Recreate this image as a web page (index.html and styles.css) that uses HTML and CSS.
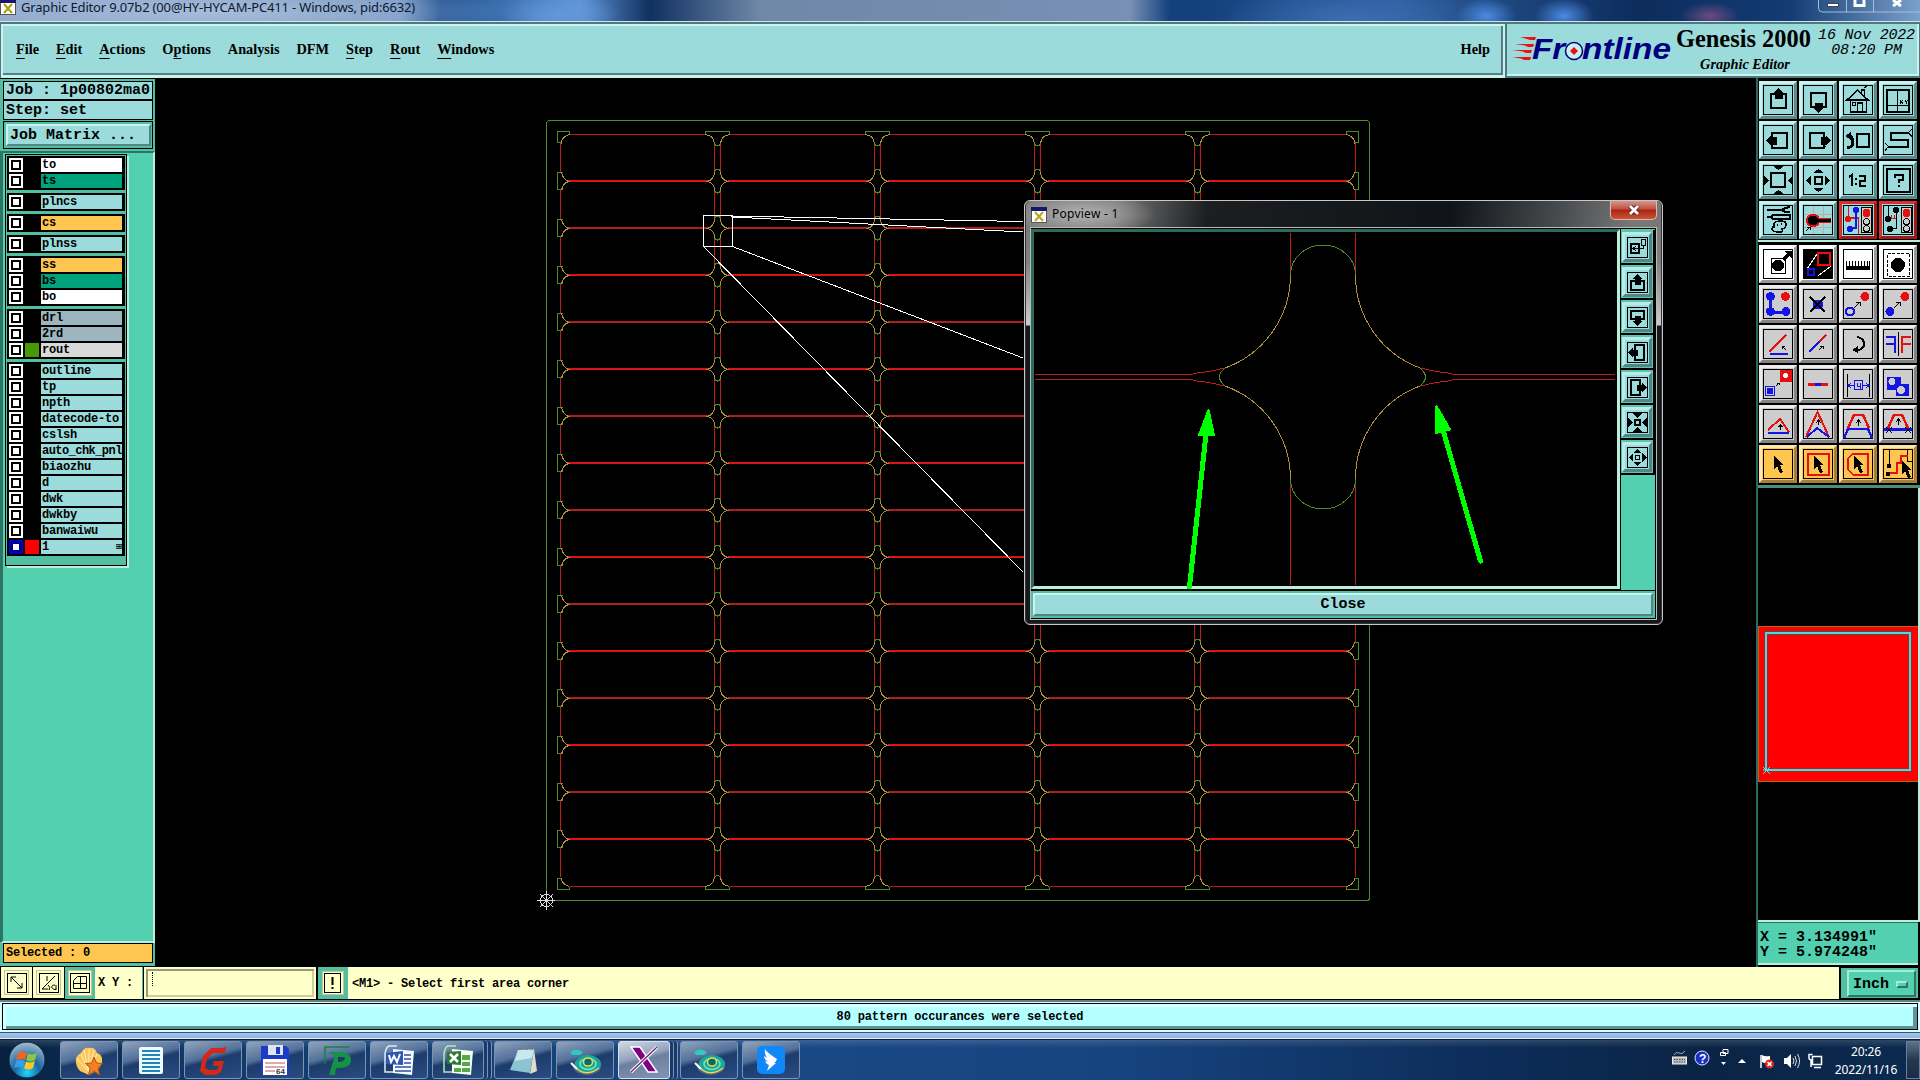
FILE: index.html
```html
<!DOCTYPE html>
<html lang="en">
<head>
    <meta charset="UTF-8">
    <title>Graphic Editor 9.07b2</title>
    <link rel="stylesheet" href="styles.css">
</head>
<body>
    <header class="titlebar">
        <svg class="app-icon" width="16" height="16"><rect x="0.5" y="0.5" width="15" height="15" fill="#fff" stroke="#555"/><rect width="16" height="4" fill="#16166e"/><path d="M4 5l8 9M12 5l-8 9" stroke="#a8a000" stroke-width="2"/></svg>
        <span class="window-title">Graphic Editor 9.07b2 (00@HY-HYCAM-PC411 - Windows, pid:6632)</span>
        <div class="window-buttons">
            <svg width="102" height="13" fill="none"><path d="M.5 0v8q0 4 4 4H102M28.500 0v12M55.500 0v12" stroke="#a9bdd6"/><rect x="9.500" y="3.500" width="11" height="3" fill="#fff" stroke="#444"/><path d="M37 0v5.500h9V0" stroke="#fff" stroke-width="3"/><path d="M75 0l8 6M83 0l-8 6" stroke="#fff" stroke-width="3"/></svg>
        </div>
    </header>

    <div class="top">
        <nav class="menubar">
            <span><u>F</u>ile</span>
            <span><u>E</u>dit</span>
            <span><u>A</u>ctions</span>
            <span>O<u>p</u>tions</span>
            <span>Analysis</span>
            <span>DFM</span>
            <span><u>S</u>tep</span>
            <span><u>R</u>out</span>
            <span><u>W</u>indows</span>
            <span class="help">Help</span>
        </nav>
        <div class="brand">
            <svg class="logo" width="164" height="40">
                <path d="M8 9h16l-1 3h-5l-3-1zM3 16h19l-1 3h-5l-3-1.500zM0 22h20l-1 3h-5l-3-1.500zM0 29h19l-1 3h-6l-3-1.500z" fill="#f01010"/>
                <g class="logo-text"><text x="20" y="31" textLength="33" lengthAdjust="spacingAndGlyphs">Fr</text><text x="70" y="31" textLength="89" lengthAdjust="spacingAndGlyphs">ntline</text></g>
                <circle cx="62" cy="23" r="8.500" fill="#c9eeee" stroke="#000080" stroke-width="1.500"/>
                <path d="M62 19l4 4-4 4-4-4z" fill="#f01010"/>
            </svg>
            <div class="product">
                <div class="product-name">Genesis 2000</div>
                <div class="product-sub">Graphic Editor</div>
            </div>
            <div class="brand-date">16 Nov 2022<br>08:20 PM</div>
        </div>
    </div>

    <main class="main">
        <aside class="left">
            <div class="job-line">Job : 1p00802ma0</div>
            <div class="job-line step">Step: set</div>
            <div class="matrix-frame"><button class="matrix">Job Matrix ...</button></div>
            <div class="layer-area">
                <div class="layers" id="layers"></div>
            </div>
            <div class="selected">Selected : 0</div>
        </aside>

        <svg class="canvas" id="canvas" width="1601" height="889" viewBox="155 78 1601 889"></svg>

        <aside class="right">
            <div class="tools pale" id="viewTools"></div>
            <div class="tools grey" id="editTools"></div>
            <div class="overview">
                <svg width="160" height="432" viewBox="1758 488 160 432">
                    <rect x="1758.500" y="626.500" width="160" height="155" fill="#f00" stroke="#b06a10"/>
                    <rect x="1766" y="633" width="144" height="137" fill="none" stroke="#4e4e50" stroke-width="4"/>
                    <rect x="1766" y="633" width="144" height="137" fill="none" stroke="#b0b0b4" stroke-width="2"/>
                    <path d="M1765 633h146" stroke="#50d8d8" stroke-width="2"/>
                    <path d="M1763 767l7 7M1770 767l-7 7M1763 770h7" stroke="#50e8e8"/>
                </svg>
            </div>
            <div class="coords">X = 3.134991"<br>Y = 5.974248"</div>
        </aside>

        <section class="popview">
            <div class="pop-title">
                <svg width="16" height="16"><rect x="0.500" y="0.500" width="15" height="15" fill="#fff" stroke="#555"/><rect width="16" height="4" fill="#16166e"/><path d="M4 5l8 9M12 5l-8 9" stroke="#b8a820" stroke-width="2"/></svg>
                <span>Popview - 1</span>
                <div class="pop-x"><svg width="12" height="10"><path d="M2 1l8 8M10 1l-8 8" stroke="#4a2020" stroke-width="4.500"/><path d="M2 1l8 8M10 1l-8 8" stroke="#fff" stroke-width="2.800"/></svg></div>
            </div>
            <div class="pop-body">
                <div class="pop-main">
                    <svg class="pop-canvas" width="583" height="354" viewBox="1034 232 583 354" fill="none">
                        <path class="red" d="M1290.500 233V275M1355.500 233V275M1290.500 480V585M1355.500 480V585M1035 374.500H1193M1035 379.500H1193M1452 374.500H1615M1452 379.500H1615"/>
                        <path class="red" d="M1193 373.500Q1210 372 1225 368M1193 380.500Q1210 382 1225 386M1452 373.500Q1435 372 1420 368M1452 380.500Q1435 382 1420 386"/>
                        <path class="gold" d="M1290.500 275A99 99 0 0 1 1225 368M1355.500 275A99 99 0 0 0 1420 368M1290.500 479A99 99 0 0 0 1225 386M1355.500 479A99 99 0 0 1 1420 386"/>
                        <path class="green" d="M1290.500 275A32.500 30 0 0 1 1355.500 275M1290.500 479A32.500 30 0 0 0 1355.500 479M1225 368Q1214 377 1225 386M1420 368Q1431 377 1420 386"/>
                        <g fill="#0f0" stroke="#0f0" stroke-linejoin="round">
                            <path d="M1208.500 410L1199 435H1214z" stroke-width="2"/>
                            <path d="M1206 434L1189.500 587" stroke-width="5" stroke-linecap="round"/>
                            <path d="M1436.500 406L1435.500 433L1450 429.500z" stroke-width="2"/>
                            <path d="M1443 430L1480.500 561" stroke-width="5" stroke-linecap="round"/>
                        </g>
                    </svg>
                    <div class="pop-tools" id="popTools"></div>
                </div>
                <div class="close-frame"><button class="close">Close</button></div>
            </div>
        </section>
    </main>

    <div class="command">
        <div class="cmd-btn"><svg width="20" height="20" fill="none" stroke="#000"><rect x=".5" y=".5" width="19" height="19"/><path d="M4 4l11 11M4 9V4h5M15 10v5h-5"/></svg></div>
        <div class="cmd-btn"><svg width="20" height="20" fill="none" stroke="#000"><rect x=".5" y=".5" width="19" height="19"/><path d="M16 3L3 16h6M8 3v5"/><path d="M9 12q3 2 1 5M16 12q-4 0-3 2.500t4 2M17 12v5"/></svg></div>
        <div class="cmd-btn on"><svg width="20" height="20" fill="none" stroke="#000"><rect x=".5" y=".5" width="19" height="19"/><path d="M3.500 7.500l4-4h9v12h-13zM3.500 10.500h13M10.500 3.500v12"/></svg></div>
        <label class="cmd-label">X Y :</label>
        <div class="cmd-input"><i></i></div>
        <div class="cmd-btn on bang"><svg width="18" height="20" fill="none" stroke="#000"><rect x=".5" y=".5" width="16" height="19"/><path d="M8.500 4v8M8.500 14v2" stroke-width="2"/></svg></div>
        <div class="cmd-message">&lt;M1&gt; - Select first area corner</div>
        <div class="unit"><div class="unit-btn">Inch<b></b></div></div>
    </div>

    <div class="status"><div class="status-box">80 pattern occurances were selected</div></div>
    <div class="strip"></div>

    <footer class="taskbar">
        <svg class="orb" width="60" height="40">
            <defs><radialGradient id="orbFill" cx=".5" cy=".85" r=".8"><stop offset="0" stop-color="#25d5ff"/><stop offset=".45" stop-color="#17659f"/><stop offset="1" stop-color="#9ab4c8"/></radialGradient></defs>
            <circle cx="27" cy="20" r="18" fill="url(#orbFill)" stroke="#0a2340"/>
            <path d="M18 13q4-3 9 0l-2 7q-4-2-9 0z" fill="#ee6424"/><path d="M28 13.500q5 2 9-.5l-2 7q-4 3-9 0z" fill="#8cc63e"/>
            <path d="M16 21q4-3 9 0l-2 7q-4-2-9 0z" fill="#35a0e8"/><path d="M26 21.500q5 2 9-.5l-2 7q-4 3-9 0z" fill="#fcc827"/>
        </svg>
        <div class="tasks" id="tasks"></div>
        <div class="tray">
            <svg width="160" height="40" fill="none">
                <rect x="1.500" y="17" width="14" height="7" fill="#bbb" stroke="#eee"/><path d="M3 19.500h11M3 22h11" stroke="#555" stroke-dasharray="1.500 1"/><path d="M3 15q2-4 5-2t6-2" stroke="#aaa"/>
                <circle cx="31" cy="18" r="7" fill="#1c2fc0" stroke="#dfe6ff"/><text x="28" y="22.500" fill="#fff" font-size="12" font-weight="bold" font-family="Liberation Sans, sans-serif">?</text>
                <path d="M52 9.500h5v4h-5zM49.500 12.500h5v3h-5z" stroke="#fff" fill="#12284a"/><path d="M50 22h5l-2.500 3z" fill="#fff"/>
                <path d="M67 23l4-4 4 4z" fill="#fff"/>
                <path d="M90 15v13" stroke="#fff" stroke-width="1.500"/><path d="M91 15q3 2 8 1v7q-5 1-8-1z" fill="#fff"/><circle cx="98.500" cy="24" r="4.500" fill="#d8281c"/><path d="M96.500 22l4 4M100.500 22l-4 4" stroke="#fff" stroke-width="1.500"/>
                <path d="M113 18h3l4-4v14l-4-4h-3z" fill="#fff"/><path d="M122 18q2 3 0 6M124 16q3 5 0 10M126.500 14q4 7 0 14" stroke="#ddd"/>
                <path d="M141.500 16.500h9v8h-9zM143 27.500h7M138 14v4q0 2 3 2M137.500 14.500h4M140 20v7" stroke="#fff" stroke-width="1.500"/>
            </svg>
            <div class="clock">20:26<br>2022/11/16</div>
            <div class="desktop"></div>
        </div>
    </footer>

    <script>
        // ---- layer list ----
        const layerGroups = [
            [["to", "white"], ["ts", "teal"]],
            [["plncs", ""]],
            [["cs", "orange"]],
            [["plnss", ""]],
            [["ss", "orange"], ["bs", "teal"], ["bo", "white"]],
            [["drl", "slate"], ["2rd", "slate"], ["rout", "silver", "lime"]],
            [["outline", ""], ["tp", ""], ["npth", ""], ["datecode-to", ""], ["cslsh", ""], ["auto_chk_pnl", "tight"],
             ["biaozhu", ""], ["d", ""], ["dwk", ""], ["dwkby", ""], ["banwaiwu", ""], ["1", "", "red-swatch", "active"]]
        ];
        document.getElementById("layers").innerHTML = layerGroups.map(group =>
            `<div class="layer-group">${group.map(([name, color, swatch, active]) => `
                <div class="layer">
                    <span class="check ${active || ""}"></span>
                    <span class="swatch ${swatch || ""}"></span>
                    <span class="layer-name ${color}">${name}${active ? "<em>⊞</em>" : ""}</span>
                </div>`).join("")}</div>`).join("");

        // ---- tool icons, drawn on a 38px cell ----
        const frame = `<rect x="4.500" y="4.500" width="29" height="29" fill="none" stroke="#000"/>`;
        const box = (x, y, w, h) => `<rect x="${x}" y="${y}" width="${w}" height="${h}" fill="none" stroke="#000" stroke-width="2"/>`;
        const black = d => `<path d="${d}" fill="#000"/>`;
        const line = (d, c = "#000", w = 1) => `<path d="${d}" fill="none" stroke="${c}" stroke-width="${w}"/>`;
        const dot = (x, y, r, c = "#000", s = "none") => `<circle cx="${x}" cy="${y}" r="${r}" fill="${c}" stroke="${s}" stroke-width="2"/>`;
        const red = "#e61010", blue = "#1414e6";
        const light = `<rect x="22.500" y="6.500" width="10" height="25" fill="#ccc" stroke="#000"/>` + dot(27.500, 12, 4, red) +
            `<g stroke="#000" fill="none"><circle cx="27.500" cy="20.500" r="3"/><circle cx="27.500" cy="27.500" r="3"/></g>`;
        const cursor = black("M15 11v13l3-3 3 7 3-1-3-7h4z");

        const viewIcons = [
            box(12, 13, 15, 14) + black("M19.500 7l6 5.500h-2v5h-8v-5h-2z"),
            box(12, 12, 15, 14) + black("M19.500 32l6-5.500h-2v-5h-8v5h-2z"),
            line("M8 19L18.500 9L29 19zM11.500 19v12h16V19M18.500 31v-9h5v9M13.500 21.500h3v3h-3zM22.500 12v-3h3v6M26 7l1-2", "#000", 1.500),
            box(8, 9, 22, 22) + line("M18.500 9v22M8 24.500h22M21 19l3 4M24 19l-3 4M26 19l1.500 2L29 19M27.500 21v2"),
            box(13, 12, 15, 15) + black("M7 19.500l5.500-6v2h5v8h-5v2z"),
            box(11, 12, 14, 15) + black("M32 19.500l-5.500-6v2h-5v8h5v2z"),
            box(18, 13, 12, 13) + line("M8 26q6 1 6-5t-5-6", "#000", 3) + black("M6 15l6-4v8z"),
            line("M30 12H11.500v7H29v7H9", "#000", 2) + line("M29 12l4-4M30 12l3 4M10 26l-4-4M9 26l-3 4"),
            box(12, 12, 14, 14) + black("M5 14l5 5.500-5 5.500zM34 14l-5 5.500 5 5.500zM14 5l5.500 4L25 5zM14 33l5.500-4 5.500 4z"),
            box(16, 16, 7, 7) + black("M12 14l-5 5.500 5 5.500zM26 14l5 5.500-5 5.500zM14 12l5.500-4 5.500 4zM14 27l5.500 4 5.500-4z"),
            line("M10 16l3-2v11M17 17v2M17 22v2M20 14.500h6v5h-5v5h6", "#000", 2),
            box(8, 8, 23, 23) + line("M16 17v-3h8v5h-4v3M20 24v2", "#000", 2),
            line("M8 9h15M8 16h4l2-2h17v4H14l-2-2", "#000", 1.500) + line("M31 6l-5 1-3 2 3 2h5", "#000", 2) + line("M15 26q-1-6 6-6t6 4-4 4q2 4-5 3t-4-5zM18 24h1M22 23h1", "#000", 1.500),
            line("M14.500 5v28M24.500 5v28M5 13.500h28M5 26.500h28", "#c9a8a8") + line("M15 19.500h17", red, 5) + dot(14, 19.500, 6, "#000", red) + line("M16 19.500h16", "#000", 3) + line("M7 30l4-4M8 26h3v3"),
            line("M9.500 5v12h10v16", red, 1.500) + line("M17 9v18h-6", blue, 1.500) + dot(9, 18, 3, red) + dot(17, 9, 3, blue) + dot(11, 28, 3, blue) + light,
            line("M9.500 5v12h8M17 9v18h-6") + line("M10 17h7M12 14v4M15 14v4", red) + dot(9, 18, 3) + dot(17, 9, 3) + dot(11, 28, 3) + light
        ];
        const viewClasses = { 14: "alert", 15: "alert" };

        const editIcons = [
            line("M12.500 13.500h14v15h-14z") + dot(19, 20.500, 6) + line("M24 15l6-6", "#000", 3) + black("M25 6h8v8z"),
            `<rect x="5" y="5" width="28" height="28" fill="#000"/>` + line("M18 9L8 24M32 21L19 31", "#fff") + line("M19 8h12v12H19z", red, 2) + line("M9 24h6v6H9z", blue, 2),
            black("M7 16h1v5h2v-5h1v5h2v-5h1v5h2v-5h1v5h2v-5h1v5h2v-5h1v5h2v-5h1v5h2v-5h1v5h1v-5h1v9H7z"),
            `<rect x="8.500" y="8.500" width="22" height="23" fill="none" stroke="#000" stroke-dasharray="3 1.500"/>` + dot(19, 20, 7),
            line("M11.500 12v15h16", blue, 3) + dot(11.500, 11.500, 4.500, blue) + dot(11.500, 26.500, 4.500, blue) + dot(27, 26.500, 4.500, blue) + dot(26.500, 11.500, 4.500, red),
            dot(19, 19.500, 5, blue) + line("M11 12l15 15M26 12L11 27", "#000", 2),
            dot(26, 11.500, 4.500, red) + dot(11, 26.500, 4, "none", blue) + line("M15 23l6-6M17 17h4v4"),
            dot(26, 11.500, 4.500, red) + dot(11, 26.500, 4.500, blue) + line("M15 23l6-6M17 17h4v4"),
            line("M10 27L27 10", red, 2.500) + line("M11 29h18", blue, 2.500) + line("M27 25l-4-4M23 24v-3h3"),
            line("M20 17l7-7", red, 2.500) + line("M10 27l10-10", blue, 2.500) + line("M20 25l4-4M21 21h3v3"),
            line("M18 12q7 1 7 7t-8 6", "#000", 2) + black("M13 25l6-4v7z"),
            line("M19.500 7v24") + line("M7 12h9v16M7 19h9", blue, 2.500) + line("M32 12h-9v16M32 19h-9", red, 2.500),
            line("M22 6h9v9h-9z", red, 3) + dot(26.500, 10.500, 3.500, "#fff", red) + line("M6.500 21.500h9v9h-9z", blue) + dot(11, 26, 3.500, blue) + line("M17 21l3-3M18 18h2v2"),
            line("M9 19.500h20", red, 3) + line("M16 19.500h6", blue, 3),
            line("M8.500 9v23M30.500 9v23") + line("M10 20.500h5M24 20.500h6M12 18l-3 2.500 3 2.500M27 18l3 2.500-3 2.500M15.500 15.500h8v9h-8zM18.500 18v3h3M21.500 18v6", blue),
            `<path d="M8 12h14v7h8v12H17v-6H8z" fill="${blue}"/>` + dot(13, 16.500, 3.500, "#ccc") + dot(22, 25, 4, "#ccc"),
            line("M9 25L21 14l9 13", red, 2) + line("M9 27.500h21", blue, 2) + line("M21.500 25v-5M19.500 22l2-2 2 2"),
            line("M7 32L18.500 7 30 32", red, 2) + line("M8 32l10-9 12 9", blue, 2) + line("M19.500 20v-5M17 18l2.500-3 2.500 3"),
            line("M9 23l6-13h9l6 13", red, 2.500) + line("M5 33l4-9h20l4 9", blue, 2.500) + line("M19.500 21v-6M17 18l2.500-3 2.500 3"),
            line("M9 23l6-13h8l6 13", red, 2.500) + line("M5 24.500h28", blue, 2.500) + line("M19.500 20v-5M17 17l2.500-3 2.500 3M7 22l6 6M13 22l-6 6M26 22l6 6M32 22l-6 6"),
            cursor,
            line("M8.500 8.500h21v21h-21z", red, 2) + cursor,
            line("M14 8.500h15v21H14l-5-5v-11z", red, 2) + cursor,
            line("M10.500 5v17M28.500 5v11h5") + line("M9 28h9v-10h4v-7h7", red, 2) + dot(10, 21, 2.500) + dot(9, 29, 2.500) + `<g transform="translate(8 5)">${cursor}</g>`
        ];

        const toolButton = (icon, cls = "") =>
            `<div class="tool ${cls}"><svg width="38" height="38">${frame}${icon}</svg></div>`;
        document.getElementById("viewTools").innerHTML = viewIcons.map((icon, i) => toolButton(icon, viewClasses[i])).join("");
        document.getElementById("editTools").innerHTML = editIcons.map((icon, i) =>
            toolButton(icon, i < 4 ? "blank" : i >= 20 ? "gold-btn" : "")).join("");

        // popview column, the same motifs on a 21px cell
        const popFrame = `<rect x=".5" y=".5" width="20" height="20" fill="none" stroke="#000"/>`;
        const popIcons = [
            box(4, 7, 8, 9) + line("M14.500 2.500h4v6h-4zM6 11.500h10.500V9M9 9l-3 2.500L9 14"),
            box(4, 9, 13, 9) + black("M10.500 2l5 5h-2v6h-6V7h-2z"),
            box(4, 4, 13, 8) + black("M10.500 19l5-5h-2V9h-6v5h-2z"),
            box(8, 3, 9, 15) + black("M1 10.500l5-5v2h5v6H6v2z"),
            box(4, 3, 9, 15) + black("M20 10.500l-5-5v2h-5v6h5v2z"),
            box(8, 8, 5, 5) + black("M1 6l5 4.500-5 4.500zM20 6l-5 4.500 5 4.500zM5 1h11l-5.500 5zM5 20h11l-5.500-5z"),
            line("M8.500 8.500h4v4h-4z") + black("M6 6l-4.500 4.500L6 15zM15 6l4.500 4.500L15 15zM7 6h7l-3.500-4zM7 15h7l-3.500 4z")
        ];
        document.getElementById("popTools").innerHTML = popIcons.map(icon =>
            `<div class="pop-tool"><div class="pop-face"><svg width="21" height="21">${popFrame}${icon}</svg></div></div>`).join("");

        // ---- board panel ----
        const cols = [717.5, 877.5, 1037.5, 1197.5];
        const leftX = 561.5, rightX = 1354.5, topY = 134.5, bottomY = 886.5;
        let brightLines = "", dullLines = "", edges = "", gold = "", green = "";

        for (let r = 0; r < 15; r++) {
            const y = 181 + r * 47;
            const starts = [568, ...cols.map(c => c + 10)];
            const ends = [...cols.map(c => c - 10), 1348];
            starts.forEach((s, i) => {
                const seg = `M${s} ${y}H${ends[i]}`;
                if (r % 2) dullLines += seg; else brightLines += seg;
            });
            cols.forEach(c => {
                gold += `M${c - 3} ${y - 9}q0 7-7 9.5q7 2 7 9M${c + 3} ${y - 9}q0 7 7 9.5q-7 2-7 9`;
                green += `M${c - 3} ${y - 8}q0-4 3-4t3 4M${c - 3} ${y + 8}q0 4 3 4t3-4`;
            });
            gold += `M${leftX} ${y - 9}q1 7 7 9.5q-6 2-7 9M${rightX} ${y - 9}q-1 7-7 9.5q6 2 7 9`;
            green += `M${leftX + 1} ${y - 8.5}h-5v17h5M${rightX - 1} ${y - 8.5}h5v17h-5`;
        }

        // top and bottom edges: s flips the shape for the lower one
        [[topY, 1], [bottomY, -1]].forEach(([y, s]) => {
            const starts = [570, ...cols.map(c => c + 12)];
            const ends = [...cols.map(c => c - 12), 1346];
            starts.forEach((x, i) => edges += `M${x} ${y}H${ends[i]}`);
            cols.forEach(c => {
                gold += `M${c - 12} ${y}q8 ${s} 9 ${9 * s}M${c + 12} ${y}q-8 ${s} -9 ${9 * s}`;
                green += `M${c - 12} ${y}v${-3 * s}h24v${3 * s}M${c - 3} ${y + 8 * s}q0 ${3 * s} 3 ${3 * s}t3 ${-3 * s}`;
            });
            gold += `M${leftX} ${y + 9 * s}q0 ${-7 * s} 8 ${-9 * s}M${rightX} ${y + 9 * s}q0 ${-7 * s} -8 ${-9 * s}`;
            green += `M${leftX + 8} ${y}v${-3 * s}h-12v${11 * s}h4M${rightX - 8} ${y}v${-3 * s}h12v${11 * s}h-4`;
        });
        for (let r = 0; r < 16; r++) {
            const y1 = 143 + r * 47, y2 = 172 + r * 47;
            [leftX - 1, rightX + 1].forEach(x => edges += `M${x} ${y1}V${y2}`);
            cols.forEach(c => edges += `M${c - 3} ${y1}V${y2}M${c + 3} ${y1}V${y2}`);
        }

        document.getElementById("canvas").innerHTML = `
            <g fill="none">
                <rect class="green" x="546.5" y="120.5" width="823" height="780" rx="3"/>
                <path class="red" d="${edges}"/>
                <path d="${brightLines}" stroke="#dc1414" stroke-width="2"/>
                <path d="${dullLines}" stroke="#ae2020" stroke-width="2"/>
                <path class="green" d="${green}"/>
                <path class="gold" d="${gold}"/>
                <path d="M703.5 215.500h29v31h-29zM703.500 215.500L1023 221.500M732.500 217L1023 232M732.500 246.500L1023 358M703.500 246.500L1023 572" stroke="#fff"/>
                <path d="M537 900.500h18M546.500 891v19M540 894l13 13M553 894l-13 13" stroke="#ddd"/>
                <circle cx="546.500" cy="900.500" r="6" stroke="#ddd"/>
            </g>`;

        // ---- taskbar ----
        const reel = `<ellipse cx="18" cy="22" rx="14" ry="9" fill="#5a5f88"/><ellipse cx="19" cy="20" rx="13" ry="9" fill="#18a898"/><ellipse cx="19" cy="20" rx="8" ry="5.500" fill="none" stroke="#7ce0c8" stroke-width="1.500"/><ellipse cx="19" cy="18" rx="4.500" ry="4" fill="#0a6a68" stroke="#e8dc50" stroke-width="1.500"/><path d="M8 25q10 8 22-1" fill="none" stroke="#e8dc50" stroke-width="1.500"/><path d="M1 8q6-5 13 0l-3 3H3z" fill="#30c8c0"/><path d="M2 19l6 6" stroke="#fff" stroke-width="2"/>`;
        const tasks = [
            [`<path d="M16 31L7 27Q2 22 3 14q2-4 5-5 3-6 8-5 6-1 8 5 4 1 5 5 1 8-6 13z" fill="#fbc65b"/><path d="M16 28L8 10M16 28V5M16 28l8-18M16 28L4 15M16 28l-5-22M16 28l5-22" stroke="#fff0b8" fill="none"/><path d="M21 13l2.500 6 6 .5-4.500 4.500 1.500 7-5.500-4-5.500 4 1.500-7-4.500-4.500 6-.5z" fill="#f08020" stroke="#b85410"/>`],
            [`<rect x="4" y="3" width="24" height="27" rx="2" fill="#eef8ff"/><path d="M7 7h18M7 11h18M7 15h18M7 19h18M7 23h18M7 27h18" stroke="#2086b8" stroke-width="2"/>`],
            [`<path d="M29 3L28 9H16l-6 6-2 9 4 2h8l2-4h-6l1-5h10l-3 11-5 3H8l-5-4 3-15 8-8h11z" fill="#d42818"/>`],
            [`<path d="M2 2h25l3 3v26H2z" fill="#1c3cc8"/><rect x="9" y="1" width="15" height="10" fill="#dfe4ee"/><rect x="17" y="3" width="4" height="7" fill="#1c3cc8"/><rect x="4" y="15" width="24" height="16" fill="#fff"/><path d="M6 19h20M6 23h20M6 27h10" stroke="#c05060"/><text x="17" y="30" font-size="8" font-weight="bold" fill="#333" font-family="Liberation Sans, sans-serif">64</text>`],
            [`<path d="M4 20V3h24" stroke="#108838" stroke-width="1.500" fill="none"/><path d="M7 8h14q10 2 9 9t-12 7h-3l-1 7H8l3-10 3-9z" fill="#139443"/><path d="M17 13h7q0 5-7 5z" fill="#1c3c66"/>`],
            [`<path d="M14 2H6Q3 3 2 10v18h10" fill="none" stroke="#dceaff" stroke-width="1.500"/><path d="M10 5l21 2-2 24-19-2z" fill="#f4f8ff"/><path d="M21 11h7M21 15h7M21 19h7M12 23h16M12 27h16" stroke="#2c50a0" stroke-width="1.500"/><path d="M3 9l17-2v14L3 20z" fill="#2c58b0"/><path d="M6 11l2 7 3-6 3 6 3-8" fill="none" stroke="#fff" stroke-width="2"/>`],
            [`<path d="M14 2H6Q3 3 2 10v18h10" fill="none" stroke="#b8e8b0" stroke-width="1.500"/><path d="M10 5l21 2-2 24-19-2z" fill="#f4fff4"/><path d="M20 11h8v5h-8zM20 18h8v4h-8zM12 24h7v4h-7zM20 24h8v4h-8z" fill="#58a848"/><path d="M5 8l14-1v14L5 20z" fill="#2c7830"/><path d="M8 10l8 8M16 10l-8 8" stroke="#fff" stroke-width="2.500"/>`, "stack"],
            [`<path d="M11 6l16-1-4 24-20-3z" fill="#8cc4d4"/><path d="M11 6l16-1-2 9-17 3z" fill="#c8e8ee"/><path d="M27 5l3 22-7 3z" fill="#e0ddc8"/><path d="M12 5h15" stroke="#777" stroke-width="2" stroke-dasharray="1.500 1"/>`],
            [reel],
            [`<path d="M3 3h9l17 25h-9z" fill="#800080" stroke="#fff" stroke-width="1.500"/><path d="M29 3L3 28" stroke="#fff" stroke-width="3.500"/><path d="M29 3L3 28" stroke="#703070" stroke-width="1.500"/>`, "stack current"],
            [reel],
            [`<rect x="2" y="2" width="28" height="28" rx="5" fill="#1188fa"/><path d="M10 5q1 3 12 10-1 3-3 4l2 0-9 8 2-6q-3-1-4-4l3 1q-4-3-4-6l3 2q-3-5-2-9z" fill="#fff"/>`]
        ];
        document.getElementById("tasks").innerHTML = tasks.map(([icon, cls]) =>
            `<div class="task-slot"><div class="task ${cls || ""}"><svg width="32" height="34">${icon}</svg></div></div>`).join("");
    </script>
</body>
</html>
```
FILE: styles.css
```css
* {
    box-sizing: border-box;
}
body {
    margin: 0;
    width: 1920px;
    height: 1080px;
    overflow: hidden;
    display: flex;
    flex-direction: column;
    background: #000;
    color: #000;
    font: bold 12px "Liberation Mono", monospace;
}
svg {
    display: block;
    flex: none;
}
button {
    font: inherit;
    color: inherit;
    padding: 0;
}
.canvas, .pop-canvas, .tool svg, .pop-tool svg {
    shape-rendering: crispEdges;
}

/* title bar */
.titlebar {
    height: 22px;
    flex: none;
    display: flex;
    background:
        radial-gradient(ellipse 130px 40px at 1350px 22px, #3f6fb4, transparent),
        radial-gradient(ellipse 30px 18px at 1486px 16px, #4c8ae0, transparent),
        radial-gradient(ellipse 30px 18px at 1564px 16px, #4c8ae0, transparent),
        radial-gradient(ellipse 30px 14px at 1710px 16px, #6a4a80, transparent),
        radial-gradient(ellipse 60px 20px at 560px 14px, #6398dc, transparent),
        radial-gradient(ellipse 300px 30px at 210px 12px, #a7bcd8, transparent),
        linear-gradient(90deg, #8ea8cc, #7898c4 400px, #1f5292 440px, #5f94d4 580px, #103060 650px, #6f88a8 760px, #7890b4 1130px, #14407c 1170px, #14407c 1200px, #2c5c9c 1400px, #0c2c5c 1640px, #133c74 1790px, #7aa0cc);
    border-bottom: 1px solid #cfe4f0;
}
.app-icon {
    margin-top: -1px;
}
.window-title {
    margin-left: 5px;
    font: 13px/14px "Noto Sans", sans-serif;
    letter-spacing: -0.17px;
    color: #0c1830;
    white-space: nowrap;
}
.window-buttons {
    margin-left: auto;
}

/* menu bar and brand */
.top {
    height: 56px;
    flex: none;
    display: flex;
    background: #4f7a7c;
}
.menubar {
    width: 1505px;
    margin: 2px 1px 0 1px;
    border: 2px solid #c9f2f0;
    border-width: 2px 2px 3px 2px;
    background: #9bdbdb;
    box-shadow: inset -2px -2px #557f84;
    display: flex;
    gap: 17px;
    padding: 14px 13px 0 13px;
    font: bold 14.3px/18px "Liberation Serif", serif;
}
.menubar u {
    text-underline-offset: 4px;
    text-decoration-thickness: 1px;
}
.menubar .help {
    margin-left: auto;
}
.brand {
    flex: 1;
    margin: 2px 1px 2px 1px;
    background: #9bdbdb;
    border: 2px solid #c9f2f0;
    border-width: 0 2px 2px 0;
    display: flex;
}
.logo {
    margin: 4px 0 0 5px;
}
.logo-text {
    font: italic bold 30px "Liberation Sans", sans-serif;
    fill: #000080;
}
.product {
    width: 140px;
    margin-left: 0;
}
.product-name {
    font: bold 24.4px/30px "Liberation Serif", serif;
    white-space: nowrap;
}
.product-sub {
    font: italic bold 14.4px/18px "Liberation Serif", serif;
    margin: 1px 0 0 24px;
}
.brand-date {
    font: italic 15px/15px "Liberation Mono", monospace;
    letter-spacing: -0.2px;
    text-align: center;
    width: 101px;
    padding-top: 4px;
    white-space: nowrap;
}

.main {
    height: 889px;
    flex: none;
    display: flex;
    position: relative;
}

/* left column */
.left {
    width: 155px;
    height: 887px;
    margin-top: 1px;
    background: #52bfa2;
    padding: 2px 2px 0 3px;
    display: flex;
    flex-direction: column;
}
.job-line {
    height: 19px;
    width: 150px;
    border: 1px solid #000;
    background: #9bdbdb;
    font-size: 15px;
    line-height: 18px;
    padding-left: 2px;
    white-space: nowrap;
}
.job-line.step {
    height: 20px;
    line-height: 19px;
}
.matrix-frame {
    width: 150px;
    height: 28px;
    margin-top: 1px;
    border: 1px solid #000;
    padding: 2px;
    flex: none;
}
.matrix {
    display: block;
    width: 145px;
    height: 22px;
    border: 2px solid;
    border-color: #c9f2f0 #508686 #508686 #c9f2f0;
    background: #9bdbdb;
    font-size: 15px;
    line-height: 17px;
    text-align: left;
    padding-left: 2px;
}
.layer-area {
    height: 792px;
    margin: 2px -2px 0 -3px;
    flex: none;
    border: 2px solid;
    border-color: #2d7464 #b9eedd #b9eedd #2d7464;
    border-left-width: 3px;
    background: #52d0b0;
    padding: 1px 0 0 2px;
}
.layers {
    width: 122px;
    height: 412px;
    border: 1px solid #000;
    box-shadow: 2px 2px #b9eedd;
    background: #52bfa2;
    padding: 1px;
    display: flex;
    flex-direction: column;
    gap: 3px;
}
.layer-group {
    width: 118px;
    background: #000;
    padding: 2px 2px 0;
}
.layer {
    display: flex;
    gap: 2px;
    height: 16px;
}
.check {
    width: 14px;
    height: 14px;
    border: 2px solid #fff;
    background: #fff;
    box-shadow: inset 0 0 0 2px #000;
}
.check.active {
    border-color: #0000c8;
    box-shadow: inset 0 0 0 2px #000080;
}
.swatch {
    width: 14px;
    height: 14px;
}
.swatch.lime {
    background: #459a06;
}
.swatch.red-swatch {
    background: #f00;
}
.layer-name {
    width: 81px;
    height: 14px;
    overflow: hidden;
    display: flex;
    justify-content: space-between;
    background: #9bdbdb;
    line-height: 15px;
    letter-spacing: -0.2px;
    padding-left: 1px;
    white-space: nowrap;
}
.layer-name.tight {
    letter-spacing: -0.55px;
}
.layer-name em {
    font: bold 8px/14px "DejaVu Sans", sans-serif;
}
.layer-name.white { background: #fff; }
.layer-name.teal { background: #00a37b; }
.layer-name.orange { background: #fec551; }
.layer-name.slate { background: #9cb5bf; }
.layer-name.silver { background: #d9d9d9; }
.selected {
    height: 20px;
    width: 150px;
    border: 1px solid #000;
    background: #fec551;
    line-height: 19px;
    letter-spacing: -0.2px;
    padding-left: 2px;
}

/* drawing classes */
.red { stroke: #c01c1c; }
.green { stroke: #4d8a2c; }
.gold { stroke: #b0923a; }

/* right column */
.right {
    width: 164px;
    display: flex;
    flex-direction: column;
    background: #000;
    border-left: 2px solid #2d6a5e;
}
.tools {
    width: 162px;
    flex: none;
    display: grid;
    grid-template-columns: repeat(4, 38px);
    grid-auto-rows: 38px;
    gap: 2px;
    padding: 3px 0 0 1px;
    background: #000;
}
.tools.pale {
    height: 164px;
    border-bottom: 2px solid #b9eedd;
}
.tools.grey {
    height: 246px;
    border-bottom: 3px solid #4e8c7c;
}
.tool {
    background: #9bdbdb;
    border: 3px solid;
    border-color: #c9f2f0 #5a8a8a #5a8a8a #c9f2f0;
}
.tool svg {
    margin: -3px;
}
.grey .tool {
    background: #cdcdcd;
    border-color: #ececec #848484 #848484 #ececec;
}
.grey .tool.blank {
    background: #fff;
    border-color: #fff #999 #999 #fff;
}
.grey .tool.gold-btn {
    background: #fec551;
    border-color: #ffe6ae #a5803a #a5803a #ffe6ae;
}
.pale .tool.alert {
    border-color: #d83030 #a01818 #a01818 #d83030;
}
.overview {
    height: 434px;
    flex: none;
    border-bottom: 2px solid #b9eedd;
    border-right: 2px solid #b9eedd;
    overflow: hidden;
}
.coords {
    flex: none;
    height: 43px;
    margin-right: 2px;
    background: #52d0b0;
    border-top: 1px solid #2d7464;
    border-bottom: 2px solid #b9eedd;
    font: bold 15px/15px "Liberation Mono", monospace;
    padding: 7px 0 0 2px;
}

/* popview window */
.popview {
    position: absolute;
    left: 1024px;
    top: 122px;
    width: 639px;
    height: 425px;
    border: 1px solid #c8c8c8;
    border-radius: 6px;
    background: linear-gradient(#777 0, #808080 60px, #ccc 124px, #15191c 125px);
    box-shadow: inset 0 0 0 1px #333;
    padding: 0 5px;
}
.pop-title {
    height: 26px;
    display: flex;
    margin: 0 -4px;
    padding: 6px 0 0 5px;
    border-radius: 5px 5px 0 0;
    font: 12px/14px "Noto Sans", sans-serif;
    background:
        radial-gradient(ellipse 75px 22px at 55px 13px, #b4b4b4, transparent),
        linear-gradient(100deg, #777 90px, #1c1e20 180px, #101418 420px, #4a4d50 530px, #777 600px);
}
.pop-title span {
    margin-left: 5px;
    letter-spacing: 0.25px;
}
.pop-x {
    width: 47px;
    height: 19px;
    margin: -6px 4px 0 auto;
    display: flex;
    align-items: center;
    justify-content: center;
    border: 1px solid #ddb8b0;
    border-top: 0;
    border-radius: 0 0 5px 5px;
    background: linear-gradient(#d8948a, #c05040 45%, #a82410 50%, #cc5434);
}
.pop-body {
    height: 393px;
    border: 1px solid #bbb;
    background: #000;
    padding: 1px 1px 1px 0;
}
.pop-main {
    height: 361px;
    display: flex;
}
.pop-canvas {
    box-sizing: content-box;
    overflow: visible;
    border: 3px solid;
    border-color: #2d6a5e #b9eedd #b9eedd #2d6a5e;
    background: #000;
    position: relative;
    z-index: 1;
}
.pop-tools {
    flex: 1;
    background: #52d0b0;
    padding-top: 1px;
    border-left: 1px solid #000;
    display: flex;
    flex-direction: column;
}
.pop-tool {
    height: 35px;
    padding: 2px 1px 1px;
    border-bottom: 2px solid #000;
    border-right: 2px solid #000;
    background: #5cc4aa;
}
.pop-face {
    width: 30px;
    height: 30px;
    display: flex;
    align-items: center;
    justify-content: center;
    border: 3px solid;
    border-color: #b8ecea #508686 #508686 #b8ecea;
    background: #9bdbdb;
}
.close-frame {
    height: 27px;
    border: 2px solid #52bfa2;
    margin-top: 1px;
}
.close {
    display: block;
    width: 100%;
    height: 23px;
    border: 2px solid;
    border-color: #c9f2f0 #508686 #508686 #c9f2f0;
    background: #9bdbdb;
    font-size: 15px;
    line-height: 18px;
}

/* command row */
.command {
    height: 33px;
    flex: none;
    display: flex;
    background: #000;
    padding-left: 1px;
}
.cmd-btn {
    width: 31px;
    height: 31px;
    margin-right: 1px;
    border: 3px solid #ffffca;
    background: #ffffca;
    box-shadow: inset 0 0 0 1px #c4c49c;
    display: flex;
    align-items: center;
    justify-content: center;
    flex: none;
}
.cmd-btn.on {
    width: 30px;
    height: 32px;
    margin-right: 0;
    border-color: #52bfa2;
}
.cmd-label {
    width: 48px;
    background: #ffffca;
    height: 32px;
    line-height: 33px;
    padding-left: 3px;
    letter-spacing: -0.2px;
    border-right: 1px solid #52bfa2;
}
.cmd-input {
    width: 172px;
    height: 32px;
    margin: 0 2px 0 1px;
    background: #ffffca;
    border: 2px solid #ffffca;
    box-shadow: inset 2px 2px #9a9a7a, inset -2px -2px #cfcfa4;
}
.cmd-input i {
    display: block;
    height: 14px;
    margin: 3px 0 0 6px;
    border-left: 1px dotted #000;
}
.cmd-btn.bang {
    border-width: 4px;
}
.cmd-message {
    width: 1491px;
    height: 32px;
    background: #ffffca;
    line-height: 34px;
    letter-spacing: -0.2px;
    padding-left: 4px;
}
.unit {
    flex: 1;
    margin: 1px 2px 2px 2px;
    background: #52bfa2;
    padding: 2px 2px 0 6px;
}
.unit-btn {
    height: 27px;
    display: flex;
    border: 2px solid;
    border-color: #a4ecd8 #2d7464 #2d7464 #a4ecd8;
    background: #52d0b0;
    font-size: 15px;
    line-height: 25px;
    padding-left: 4px;
}
.unit-btn b {
    width: 12px;
    height: 7px;
    margin: 9px 0 0 7px;
    border: 2px solid;
    border-color: #a4ecd8 #2d7464 #2d7464 #a4ecd8;
}

/* status line */
.status {
    height: 32px;
    flex: none;
    padding: 3px 2px 0;
    background: linear-gradient(#5f8486 2px, #d8ffff 2px);
}
.status-box {
    height: 27px;
    border: 1px solid #000;
    background: #b4ffff;
    box-shadow: inset 3px 3px #d8ffff, inset -4px -3px #5f9496;
    text-align: center;
    line-height: 26px;
    letter-spacing: -0.15px;
}
.strip {
    height: 8px;
    flex: none;
    background: linear-gradient(#3c5068 1px, #a4c4f0 1px, #8cb0e4 6px, #e4f0fc 6px, #e4f0fc 7px, #101c2c 7px);
}

/* taskbar */
.taskbar {
    height: 40px;
    flex: none;
    display: flex;
    background:
        linear-gradient(rgba(255, 255, 255, 0.14), transparent 8px),
        linear-gradient(90deg, #06203e, #103a6c 200px, #1a4884 800px, #174480 1100px, #0c2c58 1500px, #0a2444 1700px, #0b2a50);
}
.tasks {
    display: flex;
}
.task-slot {
    width: 62px;
    padding-top: 1px;
}
.task {
    width: 58px;
    height: 38px;
    border: 1px solid #7e93b0;
    border-radius: 3px;
    background: linear-gradient(165deg, #90a4bc, #52709a 40%, #1c3c6c 50%, #2a4c80);
    display: flex;
    justify-content: center;
    padding-top: 2px;
}
.task.stack {
    width: 52px;
    box-shadow: 3px 0 #163a6c, 4px 0 #7e93b0, 7px 0 #163a6c, 8px 0 #7e93b0;
}
.task.current {
    background: linear-gradient(165deg, #d4dae2, #94a4bc 40%, #6a80a2 50%, #8494b2);
    border-color: #d8e0ec;
}
.tray {
    margin-left: auto;
    display: flex;
}
.clock {
    width: 70px;
    margin-right: 5px;
    padding-top: 3px;
    text-align: center;
    color: #fff;
    font: 12px/18px "Noto Sans", sans-serif;
    letter-spacing: -0.15px;
}
.desktop {
    width: 14px;
    height: 38px;
    margin-top: 1px;
    border: 1px solid #6c7f96;
    background: linear-gradient(#5e7086, #24384f 50%, #1a2c44);
}
```
